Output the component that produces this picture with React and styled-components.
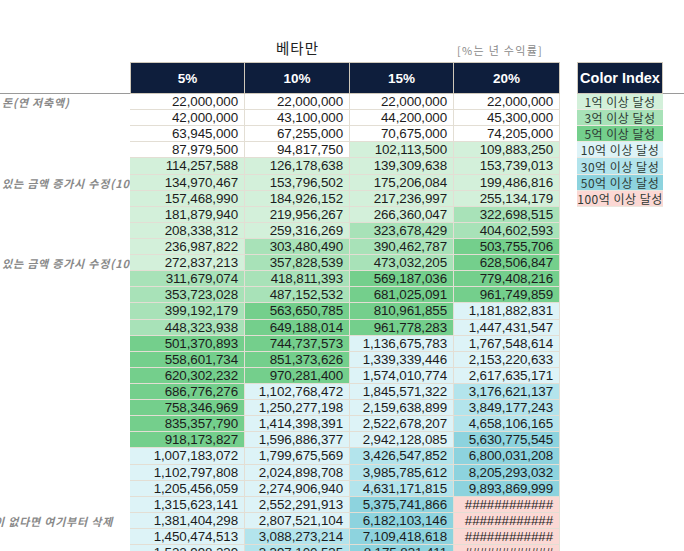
import React from 'react';
import styled, { createGlobalStyle } from 'styled-components';

const GlobalStyle = createGlobalStyle`
  html, body {
    margin: 0;
    padding: 0;
    background: #ffffff;
  }
  body {
    font-family: 'Liberation Sans', 'Noto Sans CJK KR', sans-serif;
    overflow: hidden;
  }
`;

const COLS = '130px 115px 105px 104px 106px 17px 86px 1fr';

const tones = {
  none: '#ffffff',
  g1: '#d3f0da',
  g2: '#a8e2b8',
  g3: '#74cf8c',
  c1: '#ddf3f7',
  c2: '#b3e4ec',
  c3: '#8dd3de',
  p: '#fbd8d4',
};

const Sheet = styled.div`
  display: grid;
  grid-template-columns: ${COLS};
  grid-template-rows: 62px 32px repeat(29, 16.12px);
  width: 684px;
  height: 551px;
  overflow: hidden;
`;

const Blank = styled.div`
  border-bottom: ${p => (p.$rule ? '1px solid #9a9a9a' : 'none')};
  box-sizing: border-box;
`;

const Title = styled.div`
  display: flex;
  align-items: flex-end;
  justify-content: center;
  padding-bottom: 4px;
  font-family: 'Noto Sans CJK KR', sans-serif;
  font-size: 14.5px;
  letter-spacing: 1px;
  color: #222;
`;

const Note = styled.div`
  display: flex;
  align-items: flex-end;
  padding: 0 0 4px 3px;
  font-family: 'Noto Sans CJK KR', sans-serif;
  font-size: 11px;
  letter-spacing: 1.3px;
  color: #8a8a8a;
  white-space: nowrap;
`;

const Head = styled.div`
  background: #0e1e3c;
  color: #ffffff;
  font-family: 'Liberation Sans', sans-serif;
  font-weight: 700;
  font-size: ${p => (p.$wide ? '14.5px' : '13.5px')};
  display: flex;
  align-items: center;
  justify-content: center;
  border: 1px solid #cfc8ba;
  border-left: ${p => (p.$first ? '1px solid #cfc8ba' : 'none')};
  box-sizing: border-box;
  white-space: nowrap;
`;

const Label = styled.div`
  display: flex;
  align-items: center;
  overflow: hidden;
  white-space: nowrap;
  font-family: 'Noto Sans CJK KR', sans-serif;
  font-style: italic;
  font-weight: 700;
  font-size: 11px;
  letter-spacing: 0.8px;
  color: #8a8a8a;
  padding-left: 2px;
  & > span {
    margin-left: ${p => p.$shift || 0}px;
  }
`;

const Num = styled.div`
  display: flex;
  align-items: center;
  justify-content: flex-end;
  padding-right: 6px;
  background: ${p => tones[p.$tone]};
  border-right: 1px solid #e3ded4;
  border-bottom: 1px solid #e3ded4;
  box-sizing: border-box;
  font-size: 13.4px;
  color: #1c1c1c;
  white-space: nowrap;
  overflow: hidden;
  letter-spacing: -0.1px;
`;

const Legend = styled.div`
  display: flex;
  align-items: center;
  justify-content: center;
  background: ${p => tones[p.$tone]};
  border-bottom: 1px solid #ece8e0;
  box-sizing: border-box;
  font-family: 'Noto Sans CJK KR', sans-serif;
  font-size: 12px;
  letter-spacing: 0.5px;
  color: #2e3a34;
  white-space: nowrap;
`;

const rates = ['5%', '10%', '15%', '20%'];

const rows = [
  [22000000, 22000000, 22000000, 22000000],
  [42000000, 43100000, 44200000, 45300000],
  [63945000, 67255000, 70675000, 74205000],
  [87979500, 94817750, 102113500, 109883250],
  [114257588, 126178638, 139309638, 153739013],
  [134970467, 153796502, 175206084, 199486816],
  [157468990, 184926152, 217236997, 255134179],
  [181879940, 219956267, 266360047, 322698515],
  [208338312, 259316269, 323678429, 404602593],
  [236987822, 303480490, 390462787, 503755706],
  [272837213, 357828539, 473032205, 628506847],
  [311679074, 418811393, 569187036, 779408216],
  [353723028, 487152532, 681025091, 961749859],
  [399192179, 563650785, 810961855, 1181882831],
  [448323938, 649188014, 961778283, 1447431547],
  [501370893, 744737573, 1136675783, 1767548614],
  [558601734, 851373626, 1339339446, 2153220633],
  [620302232, 970281400, 1574010774, 2617635171],
  [686776276, 1102768472, 1845571322, 3176621137],
  [758346969, 1250277198, 2159638899, 3849177243],
  [835357790, 1414398391, 2522678207, 4658106165],
  [918173827, 1596886377, 2942128085, 5630775545],
  [1007183072, 1799675569, 3426547852, 6800031208],
  [1102797808, 2024898708, 3985785612, 8205293032],
  [1205456059, 2274906940, 4631171815, 9893869999],
  [1315623141, 2552291913, 5375741866, 11872643999],
  [1381404298, 2807521104, 6182103146, 13059908399],
  [1450474513, 3088273214, 7109418618, 14365899239],
  [1522998239, 3397100535, 8175831411, 15802489163],
];

const labels = {
  0: { text: '돈(연 저축액)' },
  5: { text: '있는 금액 증가시 수정(10%)' },
  10: { text: '있는 금액 증가시 수정(10%)' },
  26: { text: '이 없다면 여기부터 삭제', shift: -8 },
};

const legend = [
  ['g1', '1억 이상 달성'],
  ['g2', '3억 이상 달성'],
  ['g3', '5억 이상 달성'],
  ['c1', '10억 이상 달성'],
  ['c2', '30억 이상 달성'],
  ['c3', '50억 이상 달성'],
  ['p', '100억 이상 달성'],
];

const toneOf = v => {
  if (v >= 1e10) return 'p';
  if (v >= 5e9) return 'c3';
  if (v >= 3e9) return 'c2';
  if (v >= 1e9) return 'c1';
  if (v >= 5e8) return 'g3';
  if (v >= 3e8) return 'g2';
  if (v >= 1e8) return 'g1';
  return 'none';
};

const show = v => (v >= 1e10 ? '############' : v.toLocaleString('en-US'));

const App = () => (
  <>
    <GlobalStyle />
    <Sheet>
      <Blank />
      <Blank />
      <Title>베타만</Title>
      <Blank />
      <Note>[%는 년 수익률]</Note>
      <Blank />
      <Blank />
      <Blank />

      <Blank $rule />
      {rates.map((r, i) => (
        <Head key={r} $first={i === 0}>
          {r}
        </Head>
      ))}
      <Blank />
      <Head $first $wide>
        Color Index
      </Head>
      <Blank $rule />

      {rows.map((row, i) => (
        <React.Fragment key={i}>
          <Label $shift={labels[i] && labels[i].shift}>
            <span>{labels[i] ? labels[i].text : ''}</span>
          </Label>
          {row.map((v, j) => (
            <Num key={j} $tone={toneOf(v)}>
              {show(v)}
            </Num>
          ))}
          <Blank />
          {legend[i] ? (
            <Legend $tone={legend[i][0]}>{legend[i][1]}</Legend>
          ) : (
            <Blank />
          )}
          <Blank />
        </React.Fragment>
      ))}
    </Sheet>
  </>
);

export default App;
